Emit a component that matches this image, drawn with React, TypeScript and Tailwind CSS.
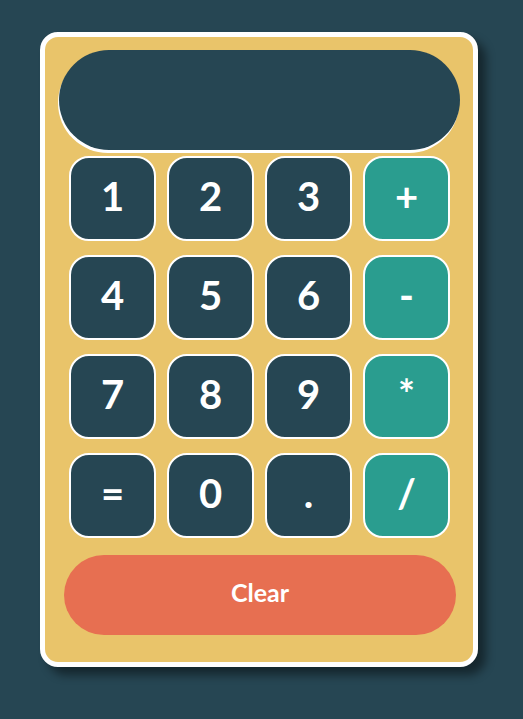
import React from "react";

const keys: { label: string; op?: boolean }[] = [
  { label: "1" }, { label: "2" }, { label: "3" }, { label: "+", op: true },
  { label: "4" }, { label: "5" }, { label: "6" }, { label: "-", op: true },
  { label: "7" }, { label: "8" }, { label: "9" }, { label: "*", op: true },
  { label: "=" }, { label: "0" }, { label: "." }, { label: "/", op: true },
];

export default function App() {
  return (
    <div
      className="min-h-[719px] w-full bg-[#264653] pl-[40px] pt-[32px]"
      style={{ fontFamily: "Lato, 'Open Sans', sans-serif" }}
    >
      <div className="w-[438px] rounded-[18px] border-[5px] border-white bg-[#E9C46A] px-[14px] pt-[13px] pb-[27px] shadow-[8px_8px_10px_rgba(0,0,0,0.45)]">
        <div className="h-[100px] w-[401px] rounded-full bg-[#264653] shadow-[-1px_3px_0_white]" />
        <div className="mt-[6px] ml-[10px] grid grid-cols-[repeat(4,87px)] gap-x-[11px] gap-y-[14px]">
          {keys.map((k) => (
            <button
              key={k.label}
              className={
                "flex h-[85px] items-center justify-center rounded-[20px] border-2 border-white pb-[5px] text-[40px] font-bold leading-none text-white " +
                (k.op ? "bg-[#2A9D8F]" : "bg-[#264653]")
              }
            >
              {k.label}
            </button>
          ))}
        </div>
        <button className="mt-[17px] ml-[5px] flex h-[80px] w-[392px] items-center justify-center rounded-full bg-[#E76F51] pb-[4px] text-[25px] font-bold text-white">
          Clear
        </button>
      </div>
    </div>
  );
}
